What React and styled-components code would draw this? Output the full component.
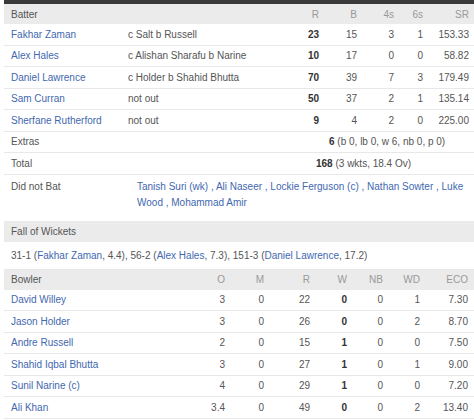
import React from 'react';
import styled, { createGlobalStyle } from 'styled-components';

const GlobalStyle = createGlobalStyle`
  body {
    margin: 0;
    background: #fff;
    font-family: "Liberation Sans", Arial, sans-serif;
    font-size: 10px;
    color: #555;
  }
`;

const batting = [
  { name: 'Fakhar Zaman', how: 'c Salt b Russell', r: 23, b: 15, f: 3, s: 1, sr: '153.33' },
  { name: 'Alex Hales', how: 'c Alishan Sharafu b Narine', r: 10, b: 17, f: 0, s: 0, sr: '58.82' },
  { name: 'Daniel Lawrence', how: 'c Holder b Shahid Bhutta', r: 70, b: 39, f: 7, s: 3, sr: '179.49' },
  { name: 'Sam Curran', how: 'not out', r: 50, b: 37, f: 2, s: 1, sr: '135.14' },
  { name: 'Sherfane Rutherford', how: 'not out', r: 9, b: 4, f: 2, s: 0, sr: '225.00' },
];

const bowling = [
  { name: 'David Willey', o: '3', m: 0, r: 22, w: 0, nb: 0, wd: 1, eco: '7.30' },
  { name: 'Jason Holder', o: '3', m: 0, r: 26, w: 0, nb: 0, wd: 2, eco: '8.70' },
  { name: 'Andre Russell', o: '2', m: 0, r: 15, w: 1, nb: 0, wd: 0, eco: '7.50' },
  { name: 'Shahid Iqbal Bhutta', o: '3', m: 0, r: 27, w: 1, nb: 0, wd: 1, eco: '9.00' },
  { name: 'Sunil Narine (c)', o: '4', m: 0, r: 29, w: 1, nb: 0, wd: 0, eco: '7.20' },
  { name: 'Ali Khan', o: '3.4', m: 0, r: 49, w: 0, nb: 0, wd: 2, eco: '13.40' },
];

const didNotBat = [
  'Tanish Suri (wk)',
  'Ali Naseer',
  'Lockie Ferguson (c)',
  'Nathan Sowter',
  'Luke Wood',
  'Mohammad Amir',
];

const BAT_COLS = '120px 166px 29px 38px 37px 29px 46px';
const BOWL_COLS = '196px 25px 39px 46px 37px 36px 37px 48px';

const Page = styled.div`
  margin-left: 4px;
  width: 470px;
`;

const TopBar = styled.div`
  height: 4px;
  background: #3a3a3a;
`;

const Row = styled.div`
  display: grid;
  grid-template-columns: ${p => p.cols};
  align-items: center;
  height: ${p => p.h || '21.5px'};
  box-sizing: border-box;
  border-bottom: 1px solid #e8e8e8;
`;

const HeadRow = styled(Row)`
  background: #ebebeb;
  border-bottom: none;
  color: #999;
`;

const HeadLabel = styled.div`
  padding-left: 7px;
  color: #555;
`;

const Cell = styled.div`
  text-align: right;
  white-space: nowrap;
  font-weight: ${p => (p.bold ? 'bold' : 'normal')};
  color: ${p => (p.bold ? '#333' : 'inherit')};
`;

const NameCell = styled.div`
  padding-left: 7px;
  color: #3f68b0;
  white-space: nowrap;
`;

const HowCell = styled.div`
  padding-left: 4px;
  white-space: nowrap;
`;

const SummaryRow = styled.div`
  display: flex;
  align-items: center;
  height: 21.5px;
  box-sizing: border-box;
  border-bottom: 1px solid #e8e8e8;
`;

const SummaryLabel = styled.div`
  width: 120px;
  padding-left: 7px;
  box-sizing: border-box;
`;

const SummaryValue = styled.div`
  padding-left: ${p => p.offset}px;
  white-space: nowrap;
  b {
    color: #333;
  }
`;

const DnbRow = styled.div`
  display: flex;
  padding: 4px 0 5px;
  line-height: 16px;
`;

const DnbLabel = styled.div`
  width: 133px;
  flex-shrink: 0;
  padding-left: 7px;
  box-sizing: border-box;
`;

const DnbList = styled.div`
  color: #3f68b0;
  padding-right: 4px;
`;

const SectionHead = styled.div`
  margin-top: ${p => p.mt || 0}px;
  height: ${p => p.h || 21}px;
  display: flex;
  align-items: center;
  padding-left: 7px;
  background: #ebebeb;
  color: #555;
`;

const FowLine = styled.div`
  height: 28px;
  display: flex;
  align-items: center;
  padding-left: 7px;
  padding-top: 1px;
  border-bottom: 1px solid #e8e8e8;
  box-sizing: border-box;
  white-space: nowrap;
`;

const Link = styled.span`
  color: #3f68b0;
`;

export default function App() {
  return (
    <Page>
      <GlobalStyle />
      <TopBar />
      <HeadRow cols={BAT_COLS} h="20px">
        <HeadLabel>Batter</HeadLabel>
        <div />
        <Cell>R</Cell>
        <Cell>B</Cell>
        <Cell>4s</Cell>
        <Cell>6s</Cell>
        <Cell>SR</Cell>
      </HeadRow>
      {batting.map(p => (
        <Row key={p.name} cols={BAT_COLS}>
          <NameCell>{p.name}</NameCell>
          <HowCell>{p.how}</HowCell>
          <Cell bold>{p.r}</Cell>
          <Cell>{p.b}</Cell>
          <Cell>{p.f}</Cell>
          <Cell>{p.s}</Cell>
          <Cell>{p.sr}</Cell>
        </Row>
      ))}
      <SummaryRow>
        <SummaryLabel>Extras</SummaryLabel>
        <SummaryValue offset={205}>
          <b>6</b> (b 0, lb 0, w 6, nb 0, p 0)
        </SummaryValue>
      </SummaryRow>
      <SummaryRow>
        <SummaryLabel>Total</SummaryLabel>
        <SummaryValue offset={192}>
          <b>168</b> (3 wkts, 18.4 Ov)
        </SummaryValue>
      </SummaryRow>
      <DnbRow>
        <DnbLabel>Did not Bat</DnbLabel>
        <DnbList>{didNotBat.join(' , ')}</DnbList>
      </DnbRow>

      <SectionHead mt={5}>Fall of Wickets</SectionHead>
      <FowLine>
        31-1 (<Link>Fakhar Zaman</Link>, 4.4), 56-2 (<Link>Alex Hales</Link>, 7.3), 151-3 (
        <Link>Daniel Lawrence</Link>, 17.2)
      </FowLine>

      <HeadRow cols={BOWL_COLS} h="20px">
        <HeadLabel>Bowler</HeadLabel>
        <Cell>O</Cell>
        <Cell>M</Cell>
        <Cell>R</Cell>
        <Cell>W</Cell>
        <Cell>NB</Cell>
        <Cell>WD</Cell>
        <Cell>ECO</Cell>
      </HeadRow>
      {bowling.map(p => (
        <Row key={p.name} cols={BOWL_COLS}>
          <NameCell>{p.name}</NameCell>
          <Cell>{p.o}</Cell>
          <Cell>{p.m}</Cell>
          <Cell>{p.r}</Cell>
          <Cell bold>{p.w}</Cell>
          <Cell>{p.nb}</Cell>
          <Cell>{p.wd}</Cell>
          <Cell>{p.eco}</Cell>
        </Row>
      ))}
    </Page>
  );
}
